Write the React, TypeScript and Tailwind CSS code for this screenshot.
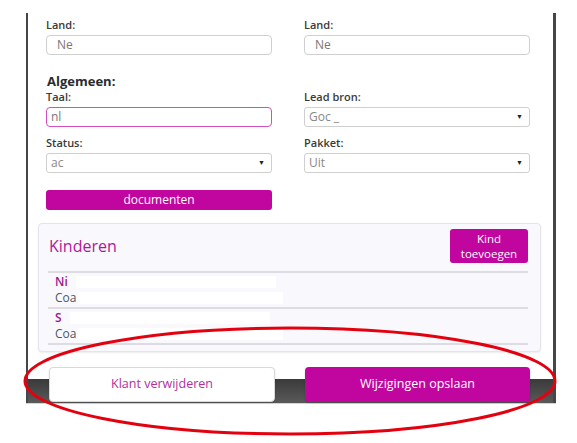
import React from "react";

const font = { fontFamily: '"Open Sans", "Liberation Sans", sans-serif' };

const Label = ({ children }: { children: React.ReactNode }) => (
  <div className="h-[14px] text-[11px] leading-[14px] font-semibold text-[#3a3a3a]">{children}</div>
);

const TextInput = ({ value, pink, pad = "pl-[10px]" }: { value: string; pink?: boolean; pad?: string }) => (
  <div
    className={`mt-[3px] h-[20px] rounded-[4px] border bg-white flex items-center text-[12px] text-[#777] ${pad} ${
      pink ? "border-[#d04fbd]" : "border-[#cfcfcf]"
    }`}
  >
    {value}
  </div>
);

const Select = ({ value }: { value: string }) => (
  <div className="mt-[3px] h-[20px] rounded-[3px] border border-[#cfcfcf] bg-white flex items-center justify-between pl-[4px] pr-[6px] text-[12px] text-[#888]">
    <span>{value}</span>
    <span className="text-[7px] text-[#222]">▼</span>
  </div>
);

const kids = [{ name: "Ni" }, { name: "S" }];

export default function App() {
  return (
    <div className="relative w-[577px] h-[443px] bg-white overflow-hidden" style={font}>
      <div className="pt-[13px]">
        <div className="ml-[26px] w-[530px] border-l-2 border-r-[3px] border-[#464646] pl-[10px] pr-[12px] pt-[5px]">
          <div className="px-[8px] pr-[11px]">
            <div className="grid grid-cols-2 gap-x-8">
              <div>
                <Label>Land:</Label>
                <TextInput value="Ne" />
              </div>
              <div>
                <Label>Land:</Label>
                <TextInput value="Ne" />
              </div>
            </div>
            <div className="mt-[18px] h-[16px] text-[13px] leading-[16px] font-bold text-[#2b2b2b] pl-px">Algemeen:</div>
            <div className="mt-[1px] grid grid-cols-2 gap-x-8">
              <div>
                <Label>Taal:</Label>
                <TextInput value="nl" pink pad="pl-[4px]" />
              </div>
              <div>
                <Label>Lead bron:</Label>
                <Select value="Goc _" />
              </div>
            </div>
            <div className="mt-[9px] grid grid-cols-2 gap-x-8">
              <div>
                <Label>Status:</Label>
                <Select value="ac" />
              </div>
              <div>
                <Label>Pakket:</Label>
                <Select value="Uit" />
              </div>
            </div>
            <div className="mt-[17px] grid grid-cols-2 gap-x-8">
              <div className="h-[20px] rounded-[3px] bg-[#c0069f] text-white text-[12px] flex items-center justify-center">
                documenten
              </div>
            </div>
          </div>

          <div className="mt-[13px] rounded-[4px] border border-[#e4e4ea] bg-[#f9f9fd] pt-[5px] pb-[6px] pl-[9px] pr-[12px] shadow-[0_1px_2px_rgba(0,0,0,0.08)]">
            <div className="flex items-center justify-between">
              <div className="pl-px text-[16px] text-[#b0169a]">Kinderen</div>
              <div className="w-[78px] h-[34px] rounded-[3px] bg-[#c0069f] text-white text-[11.5px] leading-[15px] flex flex-col items-center justify-center text-center">
                <span>Kind</span>
                <span>toevoegen</span>
              </div>
            </div>
            <div className="mt-[8px] border-t-2 border-[#dcdce2]">
              {kids.map((k) => (
                <div key={k.name} className="h-[36px] border-b-2 border-[#dcdce2] pl-[7px] flex flex-col justify-center">
                  <div className="h-[16px] flex items-center">
                    <span className="text-[12px] leading-[16px] font-semibold text-[#a0188e]">{k.name}</span>
                    <span className="ml-[8px] h-[12px] w-[200px] bg-white" />
                  </div>
                  <div className="h-[16px] flex items-center">
                    <span className="text-[12px] leading-[16px] text-[#555]">Coa</span>
                    <span className="ml-[2px] h-[12px] w-[205px] bg-white" />
                  </div>
                </div>
              ))}
            </div>
          </div>

          <div className="mt-[15px] -ml-[10px] -mr-[12px] grid">
            <div className="[grid-area:1/1] flex flex-col">
              <div className="h-[12px]" />
              <div className="h-[24px] bg-gradient-to-b from-[#3a3a3a] to-[#5a5a5a]" />
            </div>
            <div className="[grid-area:1/1] flex gap-[30px] pl-[21px]">
              <div className="w-[226px] h-[35px] rounded-[4px] border border-[#d8d8d8] bg-white text-[12.5px] text-[#b0309d] flex items-center justify-center shadow-[0_1px_2px_rgba(0,0,0,0.15)]">
                Klant verwijderen
              </div>
              <div className="w-[225px] h-[35px] rounded-[4px] bg-[#c0069f] text-[12.5px] text-white flex items-center justify-center shadow-[0_1px_2px_rgba(0,0,0,0.2)]">
                Wijzigingen opslaan
              </div>
            </div>
          </div>
        </div>
        <div className="ml-[26px] w-[530px] h-px bg-[#cfd6dc]" />
      </div>

      <svg className="absolute inset-0 pointer-events-none" width="577" height="443">
        <ellipse cx="290" cy="381" rx="265" ry="53" fill="none" stroke="#e3000f" strokeWidth="3" />
      </svg>
    </div>
  );
}
